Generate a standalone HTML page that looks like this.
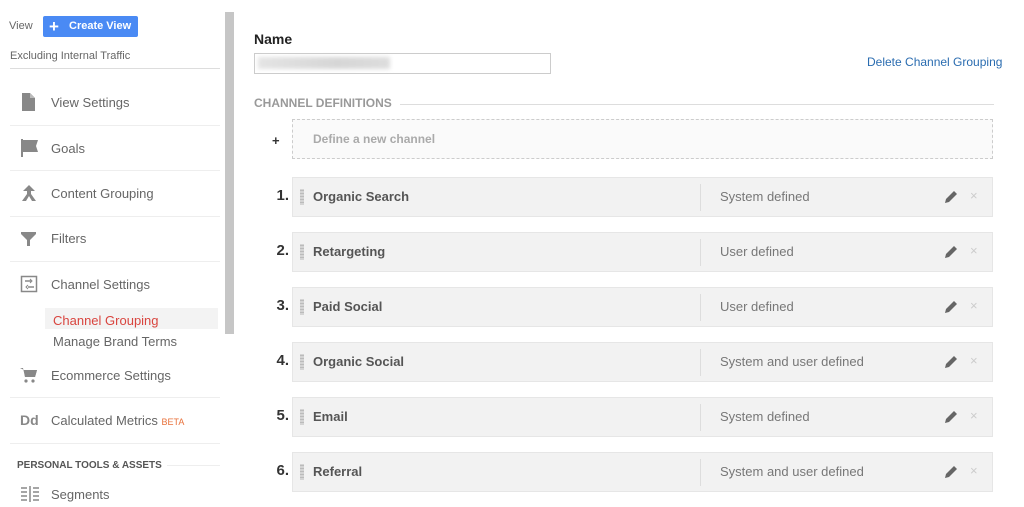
<!DOCTYPE html>
<html><head><meta charset="utf-8"><style>
*{margin:0;padding:0;box-sizing:border-box}
body{width:1024px;height:507px;background:#fff;font-family:"Liberation Sans",Arial,sans-serif;position:relative;overflow:hidden;color:#666}
.a{position:absolute;white-space:nowrap}
.sep{position:absolute;left:10px;width:210px;height:1px;background:#eee}
.nav{position:absolute;left:51px;font-size:13px;color:#666}
.ic{position:absolute;left:20px}
.row{position:absolute;left:292px;width:701px;height:40px;background:#f2f2f2;border:1px solid #e6e6e6}
.num{position:absolute;left:270px;width:19px;text-align:right;font-size:15px;font-weight:bold;color:#333}
.row .nm{position:absolute;left:20px;top:11px;font-size:13px;font-weight:bold;color:#555}
.row .dots{position:absolute;left:7px;top:11px;width:4px;height:16px;background-image:radial-gradient(#bbb 0.8px,transparent 1px);background-size:2px 3px}
.row .div{position:absolute;left:407px;top:6px;width:1px;height:27px;background:#ddd}
.row .ty{position:absolute;left:427px;top:11px;font-size:13px;color:#777}
.row .pen{position:absolute;left:651px;top:12px}
.row .x{position:absolute;left:677px;top:10px;font-size:13px;color:#ccc}
</style></head><body>
<div class="a" style="left:9px;top:20px;font-size:11px;color:#666">View</div>
<div class="a" style="left:43px;top:16px;width:95px;height:21px;background:#4a8af4;border-radius:2px;color:#fff;font-size:11px;font-weight:bold;line-height:21px;padding-left:26px">Create View</div>
<div class="a" style="left:49px;top:18px;color:#fff;font-size:17px;line-height:17px;font-weight:bold">+</div>
<div class="a" style="left:10px;top:50px;font-size:11px;color:#666">Excluding Internal Traffic</div>
<div class="sep" style="top:68px;background:#ddd"></div>
<div class="a" style="left:225px;top:12px;width:9px;height:322px;background:#c6c6c6"></div>

<svg class="ic" style="top:93px" width="16" height="18"><path d="M2 0h8l5 5v13H2z" fill="#888"/><path d="M10 0v5h5" fill="#bbb"/></svg>
<div class="nav" style="top:95px">View Settings</div>
<div class="sep" style="top:125px"></div>
<svg class="ic" style="top:139px" width="19" height="18"><rect x="1" y="0" width="2" height="18" fill="#888"/><path d="M3 1h15l-2 6 2 6H3z" fill="#888"/></svg>
<div class="nav" style="top:141px">Goals</div>
<div class="sep" style="top:170px"></div>
<svg class="ic" style="top:184px" width="18" height="18"><path d="M9 1l-6 6h4v3l-5 7h4l3-5 3 5h4l-5-7V7h4z" fill="#888"/></svg>
<div class="nav" style="top:186px">Content Grouping</div>
<div class="sep" style="top:216px"></div>
<svg class="ic" style="top:231px" width="18" height="16"><path d="M1 1h15v2l-6 6v6H7V9L1 3z" fill="#888"/></svg>
<div class="nav" style="top:231px">Filters</div>
<div class="sep" style="top:261px"></div>
<svg class="ic" style="top:275px" width="18" height="18"><rect x="1.5" y="1.5" width="15" height="15" fill="none" stroke="#888" stroke-width="1.5"/><path d="M5 6h6M8 12h6" stroke="#888" stroke-width="1.5"/><path d="M10 4l2 2-2 2M8 10l-2 2 2 2" fill="none" stroke="#888"/></svg>
<div class="nav" style="top:277px">Channel Settings</div>
<div class="a" style="left:45px;top:308px;width:173px;height:21px;background:#f3f3f3"></div>
<div class="nav" style="left:53px;top:313px;color:#d9453f">Channel Grouping</div>
<div class="nav" style="left:53px;top:334px">Manage Brand Terms</div>
<svg class="ic" style="top:367px" width="18" height="16"><path d="M0 1h3l2 9h10l2-7H4" fill="#888"/><path d="M4 3h13l-2 7H5z" fill="#888"/><circle cx="6" cy="14" r="1.6" fill="#888"/><circle cx="13" cy="14" r="1.6" fill="#888"/></svg>
<div class="nav" style="top:368px">Ecommerce Settings</div>
<div class="sep" style="top:397px"></div>
<div class="a" style="left:20px;top:412px;font-size:14px;font-weight:bold;color:#888">Dd</div>
<div class="nav" style="top:413px">Calculated Metrics <span style="font-size:9px;color:#e8713b">BETA</span></div>
<div class="sep" style="top:443px"></div>
<div class="a" style="left:17px;top:460px;font-size:10px;font-weight:bold;color:#555">PERSONAL TOOLS &amp; ASSETS</div>
<div class="a" style="left:167px;top:465px;width:53px;height:1px;background:#eee"></div>
<svg class="ic" style="top:486px" width="20" height="16"><path d="M1 2h6M1 6h6M1 10h6M1 14h6M13 2h6M13 6h6M13 10h6M13 14h6" stroke="#888" stroke-width="1.5"/><path d="M10 0v16" stroke="#888" stroke-width="1.5"/></svg>
<div class="nav" style="top:487px">Segments</div>

<div class="a" style="left:254px;top:31px;font-size:14px;font-weight:bold;color:#222">Name</div>
<div class="a" style="left:254px;top:53px;width:297px;height:21px;border:1px solid #ccc;background:#fff"></div>
<div class="a" style="left:258px;top:57px;width:132px;height:12px;background:linear-gradient(90deg,#e4e4e4,#d6d6d6 60%,#ddd);filter:blur(2px)"></div>
<div class="a" style="left:867px;top:55px;font-size:12px;color:#2a6cb0">Delete Channel Grouping</div>
<div class="a" style="left:254px;top:96px;font-size:12px;font-weight:bold;color:#999">CHANNEL DEFINITIONS</div>
<div class="a" style="left:400px;top:104px;width:594px;height:1px;background:#ddd"></div>
<div class="a" style="left:272px;top:133px;font-size:13px;font-weight:bold;color:#333">+</div>
<div class="a" style="left:292px;top:119px;width:701px;height:40px;background:#fafafa;border:1px dashed #ccc"></div>
<div class="a" style="left:313px;top:132px;font-size:12px;font-weight:bold;color:#aaa">Define a new channel</div>

<div class="num" style="top:187px">1.</div>
<div class="row" style="top:177px"><div class="dots"></div><div class="nm">Organic Search</div><div class="div"></div><div class="ty">System defined</div><svg class="pen" width="14" height="14"><path d="M1 13l1-4 8-8 3 3-8 8z" fill="#666"/></svg><div class="x">×</div></div>
<div class="num" style="top:242px">2.</div>
<div class="row" style="top:232px"><div class="dots"></div><div class="nm">Retargeting</div><div class="div"></div><div class="ty">User defined</div><svg class="pen" width="14" height="14"><path d="M1 13l1-4 8-8 3 3-8 8z" fill="#666"/></svg><div class="x">×</div></div>
<div class="num" style="top:297px">3.</div>
<div class="row" style="top:287px"><div class="dots"></div><div class="nm">Paid Social</div><div class="div"></div><div class="ty">User defined</div><svg class="pen" width="14" height="14"><path d="M1 13l1-4 8-8 3 3-8 8z" fill="#666"/></svg><div class="x">×</div></div>
<div class="num" style="top:352px">4.</div>
<div class="row" style="top:342px"><div class="dots"></div><div class="nm">Organic Social</div><div class="div"></div><div class="ty">System and user defined</div><svg class="pen" width="14" height="14"><path d="M1 13l1-4 8-8 3 3-8 8z" fill="#666"/></svg><div class="x">×</div></div>
<div class="num" style="top:407px">5.</div>
<div class="row" style="top:397px"><div class="dots"></div><div class="nm">Email</div><div class="div"></div><div class="ty">System defined</div><svg class="pen" width="14" height="14"><path d="M1 13l1-4 8-8 3 3-8 8z" fill="#666"/></svg><div class="x">×</div></div>
<div class="num" style="top:462px">6.</div>
<div class="row" style="top:452px"><div class="dots"></div><div class="nm">Referral</div><div class="div"></div><div class="ty">System and user defined</div><svg class="pen" width="14" height="14"><path d="M1 13l1-4 8-8 3 3-8 8z" fill="#666"/></svg><div class="x">×</div></div>
</body></html>
